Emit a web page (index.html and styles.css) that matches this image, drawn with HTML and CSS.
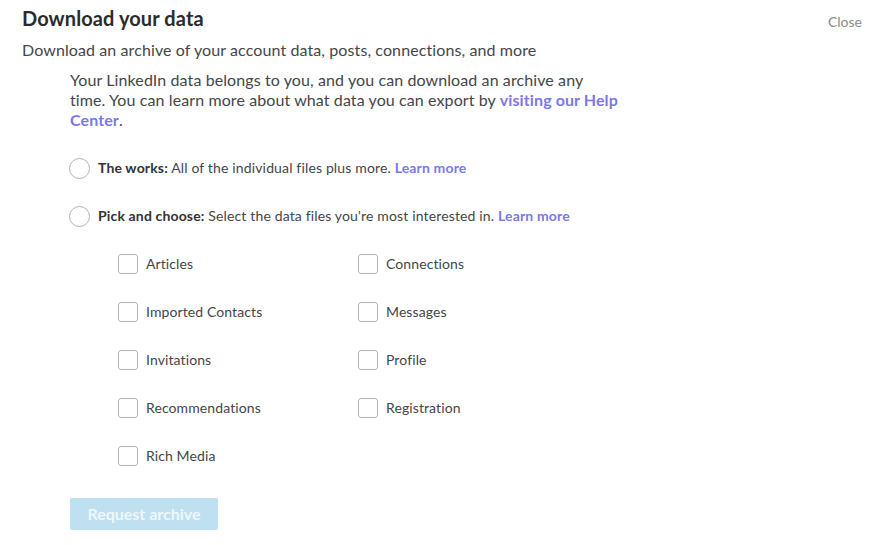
FILE: index.html
```html
<!DOCTYPE html>
<html lang="en">
<head>
<meta charset="utf-8">
<title>Download your data</title>
<link rel="stylesheet" href="styles.css">
</head>
<body>
<div class="page">
  <header class="head">
    <h1 class="title">Download your data</h1>
    <a class="close" href="#">Close</a>
  </header>
  <p class="subtitle">Download an archive of your account data, posts, connections, and more</p>
  <div class="body">
    <p class="intro">Your LinkedIn data belongs to you, and you can download an archive any<br>time. You can learn more about what data you can export by <a class="link" href="#">visiting our Help<br>Center</a>.</p>
    <label class="radio-row">
      <span class="radio"></span>
      <span class="radio-text"><b>The works:</b> All of the individual files plus more. <a class="link" href="#">Learn more</a></span>
    </label>
    <label class="radio-row">
      <span class="radio"></span>
      <span class="radio-text"><b>Pick and choose:</b> Select the data files you're most interested in. <a class="link" href="#">Learn more</a></span>
    </label>
    <div class="choices">
      <label class="check-row"><span class="box"></span><span class="check-text">Articles</span></label>
      <label class="check-row"><span class="box"></span><span class="check-text">Connections</span></label>
      <label class="check-row"><span class="box"></span><span class="check-text">Imported Contacts</span></label>
      <label class="check-row"><span class="box"></span><span class="check-text">Messages</span></label>
      <label class="check-row"><span class="box"></span><span class="check-text">Invitations</span></label>
      <label class="check-row"><span class="box"></span><span class="check-text">Profile</span></label>
      <label class="check-row"><span class="box"></span><span class="check-text">Recommendations</span></label>
      <label class="check-row"><span class="box"></span><span class="check-text">Registration</span></label>
      <label class="check-row"><span class="box"></span><span class="check-text">Rich Media</span></label>
    </div>
    <button class="request" type="button" disabled>Request archive</button>
  </div>
</div>
</body>
</html>
```

FILE: styles.css
```css
* { box-sizing: border-box; }
html, body { margin: 0; padding: 0; background: #fff; }
body {
  font-family: Lato, "Liberation Sans", sans-serif;
  color: #434649;
}
.page {
  width: 880px;
  height: 545px;
  padding: 5px 18px 0 22px;
}
.head {
  display: flex;
  justify-content: space-between;
  align-items: flex-start;
}
.title {
  margin: 0;
  font-size: 20px;
  font-weight: 700;
  line-height: 26px;
  color: #2b2b2b;
  letter-spacing: 0.1px;
}
.close {
  margin-top: 8px;
  font-size: 14px;
  line-height: 18px;
  color: #8a8a8a;
  text-decoration: none;
}
.subtitle {
  margin: 9px 0 0;
  font-size: 16px;
  line-height: 20px;
  color: #434649;
  letter-spacing: 0.1px;
}
.body {
  padding-left: 48px;
}
.intro {
  margin: 10px 0 0;
  width: 580px;
  font-size: 16px;
  line-height: 20px;
  letter-spacing: 0.1px;
}
.link {
  color: #7b78e6;
  font-weight: 700;
  text-decoration: none;
}
.radio-row {
  display: flex;
  align-items: center;
  height: 48px;
  margin-top: 0;
}
.radio-row:first-of-type { margin-top: 14px; }
.radio {
  width: 21px;
  height: 21px;
  border: 1px solid #b3b3b3;
  border-radius: 50%;
  margin-left: -1px;
  margin-right: 8px;
  flex: none;
}
.radio-text {
  font-size: 14px;
  line-height: 18px;
  letter-spacing: 0.15px;
}
.radio-text b { font-weight: 700; color: #333; }
.choices {
  display: grid;
  grid-template-columns: 240px 240px;
  grid-auto-rows: 48px;
  padding-left: 48px;
  margin-top: 0;
}
.check-row {
  display: flex;
  align-items: center;
}
.box {
  width: 20px;
  height: 20px;
  border: 1px solid #b3b3b3;
  border-radius: 3px;
  margin-right: 8px;
  flex: none;
}
.check-text {
  font-size: 14px;
  line-height: 18px;
  letter-spacing: 0.1px;
}
.request {
  display: block;
  margin-top: 18px;
  width: 148px;
  height: 32px;
  border: none;
  border-radius: 2px;
  background: #bfe0f0;
  color: #eef7fc;
  font-family: Lato, "Liberation Sans", sans-serif;
  font-size: 16px;
  font-weight: 700;
  padding: 0 0 2px;
}
```
